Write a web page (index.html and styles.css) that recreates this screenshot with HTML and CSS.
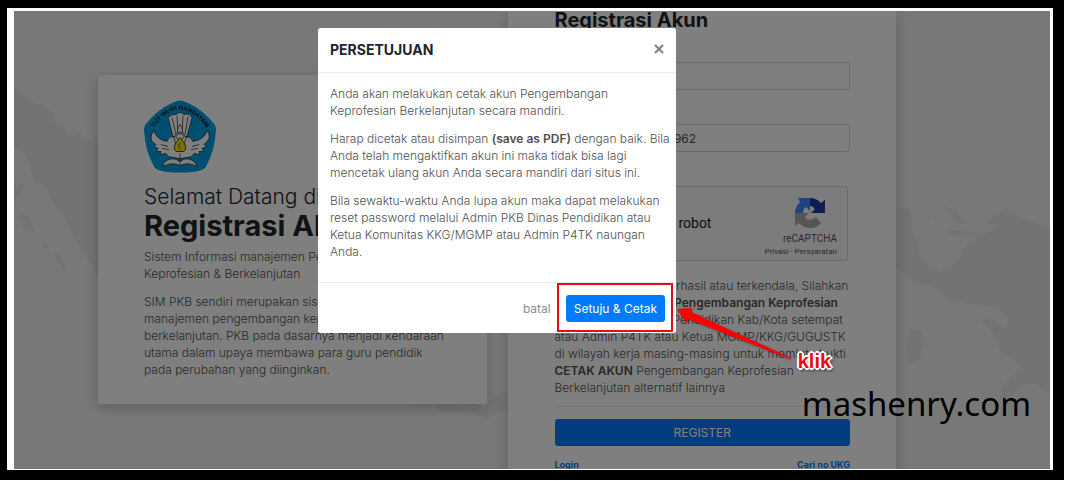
FILE: index.html
```html
<!DOCTYPE html>
<html lang="id">
<head>
<meta charset="utf-8">
<meta name="viewport" content="width=device-width, initial-scale=1">
<title>Registrasi Akun</title>
<link rel="stylesheet" href="styles.css">
</head>
<body>
<div class="stage">
  <div class="frame">
    <svg class="map" viewBox="0 0 1036 457" preserveAspectRatio="xMidYMid slice" aria-hidden="true">
      <path d="M0 76 L12 84 L20 90 L29 94 L39 101 L41 110 L52 116 L57 127 L65 120 L73 129 L82 125 L90 130 L100 138 L100 270 L84 266 L76 250 L68 238 L60 226 L53 209 L46 200 L38 188 L34 176 L21 169 L16 151 L12 143 L0 137 Z"/>
      <path d="M0 170 L12 174 L3 190 L0 192 Z M8 202 L16 205 L22 220 L17 222 L10 215 L5 206 Z M30 228 L36 234 L34 238 L30 234 Z M40 240 L46 243 L52 255 L51 260 L45 252 Z"/>
      <path d="M397 392 L412 394 L420 398 L430 391 L445 396 L460 392 L470 396 L480 384 L494 380 L494 400 L482 402 L475 407 L460 402 L440 400 L420 398 Z"/>
      <path d="M882 196 L894 197 L898 206 L896 214 L901 226 L905 242 L913 254 L925 261 L936 256 L945 247 L949 236 L962 224 L976 220 L983 213 L971 211 L979 204 L991 197 L1002 204 L1018 210 L1036 219 L1036 382 L1018 372 L1008 372 L1000 382 L984 388 L988 374 L998 362 L1010 357 L996 347 L986 340 L978 322 L966 310 L974 305 L990 318 L994 307 L980 295 L958 293 L935 288 L920 276 L900 272 L882 255 Z"/>
      <path d="M926 194 L940 198 L947 208 L955 211 L944 213 L936 204 Z M930 218 L950 219 L966 222 L950 225 L935 222 Z M912 203 L916 205 L914 209 Z M896 316 L906 318 L910 330 L904 348 L896 352 L892 336 Z"/>
    </svg>

    <main class="page">
      <section class="card welcome">
        <svg class="crest" viewBox="0 0 72 72" role="img" aria-label="Tut Wuri Handayani">
          <path d="M36 0 Q39 0 45 3 Q58 9 68 21 Q72 25 72 29 Q71 50 62 66 Q59 72 36 72 Q13 72 10 66 Q1 50 0 29 Q0 25 4 21 Q14 9 27 3 Q33 0 36 0Z" fill="#009ee0"/>
          <path id="arc" d="M10 27 Q36 -9 63 28" fill="none"/>
          <text class="motto"><textPath href="#arc" startOffset="50%" text-anchor="middle">TUT WURI HANDAYANI</textPath></text>
          <g fill="#fff" stroke="#222" stroke-width=".7" stroke-linejoin="round">
            <path d="M24 17 Q28 13 32 14 Q36 10 40 14 Q45 12 48 17 L43 36 H29 Z"/>
            <path d="M28 17 L32 34 M33 15 L34 34 M39 15 L38 34 M44 16 L41 34" fill="none"/>
            <path d="M10 30 Q4 38 10 43 L12 44 L10 46 L14 48 L12 51 L17 51 L16 54 L22 53 L24 56 L35 58 L37 58 L48 56 L50 53 L56 54 L55 51 L60 51 L58 48 L63 46 L60 44 Q69 37 63 30 Q61 39 49 41 Q46 35 42 37 L36 28 L30 37 Q26 34 23 41 Q12 39 10 30Z"/>
            <path d="M17 44 L24 46 M18 48 L25 49 M55 44 L48 46 M54 48 L47 49 M30 37 L32 45 M42 37 L40 45" fill="none"/>
            <path d="M36 24 Q31 31 36 34 Q41 31 36 24Z M32 36 L36 31 L40 36 L38 39 H34Z"/>
            <path d="M36 61 Q28 55 20 62 L19 66 Q28 61 36 65 Q44 61 53 66 L51 62 Q43 55 36 61Z M36 53 V65"/>
          </g>
          <path d="M36 37 Q27 47 32 51 H40 Q45 47 36 37Z" fill="#ffe600" stroke="#222" stroke-width=".8"/>
          <path d="M36 42 Q33 46 37 49" fill="none" stroke="#222" stroke-width=".8"/>
        </svg>
        <h1 class="greeting"><span class="greeting-light">Selamat Datang di</span><span class="greeting-bold">Registrasi Akun</span></h1>
        <p>Sistem Informasi manajemen Pengembangan<br>Keprofesian &amp; Berkelanjutan</p>
        <p>SIM PKB sendiri merupakan sistem informasi<br>manajemen pengembangan keprofesian<br>berkelanjutan. PKB pada dasarnya menjadi kendaraan<br>utama dalam upaya membawa para guru pendidik<br>pada perubahan yang diinginkan.</p>
      </section>

      <form class="card register">
        <h2 class="form-title">Registrasi Akun</h2>
        <div class="field">
          <label for="ukg">No UKG</label>
          <input class="control" id="ukg" type="text">
        </div>
        <div class="field">
          <label for="year">Tahun Lahir</label>
          <div class="date-row">
            <input class="control" type="text" aria-label="Tanggal">
            <input class="control" id="year" type="text" value="1962">
          </div>
        </div>
        <div class="captcha">
          <input type="checkbox" id="robot">
          <label for="robot">Saya bukan robot</label>
          <div class="captcha-brand">
            <svg class="captcha-logo" viewBox="0 0 30 30" aria-hidden="true">
              <path d="M15 0 A15 15 0 0 1 26 5 L30 2 V15 H16 L20 11 Q18 8 15 8Z" fill="#1c3aa9"/>
              <path d="M15 0 H3 L5 4 Q0 9 0 15 H8 Q8 11 11 9 L15 13Z" fill="#4285f4"/>
              <path d="M0 15 V28 L4 25 Q9 30 15 30 Q22 30 26 25 L21 19 Q18 22 15 22 Q12 22 10 19 L14 15Z" fill="#ababab"/>
            </svg>
            <span class="captcha-name">reCAPTCHA</span>
            <span class="captcha-terms">Privasi - Persyaratan</span>
          </div>
        </div>
        <p class="help">Bila registrasi tidak berhasil atau terkendala, Silahkan<br>menghubungi Admin <b>Pengembangan Keprofesian</b><br><b>Berkelanjutan</b> Dinas Pendidikan Kab/Kota setempat<br>atau Admin P4TK atau Ketua MGMP/KKG/GUGUSTK<br>di wilayah kerja masing-masing untuk meminta bukti<br><b>CETAK AKUN</b> Pengembangan Keprofesian<br>Berkelanjutan alternatif lainnya</p>
        <button class="btn btn-block" type="button">REGISTER</button>
        <nav class="links"><a href="#login">Login</a><a href="#ukg">Cari no UKG</a></nav>
      </form>
    </main>

    <div class="overlay">
      <div class="modal" role="dialog" aria-modal="true" aria-labelledby="modal-title">
        <header class="modal-header">
          <h2 id="modal-title">PERSETUJUAN</h2>
          <button class="close" type="button" aria-label="Tutup">
            <svg viewBox="0 0 10 10" aria-hidden="true"><path d="M1 1 L9 9 M9 1 L1 9"/></svg>
          </button>
        </header>
        <div class="modal-body">
          <p>Anda akan melakukan cetak akun Pengembangan<br>Keprofesian Berkelanjutan secara mandiri.</p>
          <p>Harap dicetak atau disimpan <b>(save as PDF)</b> dengan baik. Bila<br>Anda telah mengaktifkan akun ini maka tidak bisa lagi<br>mencetak ulang akun Anda secara mandiri dari situs ini.</p>
          <p>Bila sewaktu-waktu Anda lupa akun maka dapat melakukan<br>reset password melalui Admin PKB Dinas Pendidikan atau<br>Ketua Komunitas KKG/MGMP atau Admin P4TK naungan<br>Anda.</p>
        </div>
        <footer class="modal-footer">
          <button class="btn-text" type="button">batal</button>
          <div class="marked">
            <button class="btn" type="button">Setuju &amp; Cetak</button>
            <svg class="arrow" viewBox="0 0 116 54" aria-hidden="true"><path d="M0 0 L15 -1 L14 3 L114 49 L113 50 L11 10 L9 14Z"/></svg>
            <span class="callout">klik</span>
          </div>
        </footer>
      </div>
    </div>
    <div class="watermark">mashenry.com</div>
  </div>
</div>
</body>
</html>
```
FILE: styles.css
```css
* {
  box-sizing: border-box;
}

body {
  margin: 0;
  background: #fff;
  color: #505050;
  font: 300 12px/17px Inter, "Liberation Sans", sans-serif;
}

h1, h2, p {
  margin: 0;
}

b {
  font-weight: 600;
}

button, input {
  font: inherit;
}

.stage {
  display: flex;
  height: calc(100vh - 1px);
  margin-right: 2px;
  padding: 8px 11px 10px 7px;
  background: #000;
}

.frame {
  position: relative;
  flex: 1;
  overflow: hidden;
  border: solid #fff;
  border-width: 3px 3px 1px 7px;
  background: #f1f1f1;
}

.map {
  position: absolute;
  inset: 0;
  width: 100%;
  height: 100%;
  fill: #e6e7e7;
}

.page {
  position: relative;
  display: grid;
  grid-template-columns: repeat(2, minmax(0, 1fr));
  gap: 21px;
  align-items: start;
  max-width: 966px;
  padding: 0 84px;
}

.card {
  background: #fff;
  box-shadow: 0 4px 14px rgba(0, 0, 0, .22);
}

.welcome {
  margin-top: 64px;
  padding: 25px 46px 26px;
  border-radius: 2px;
  white-space: nowrap;
}

.welcome p {
  margin-bottom: 11px;
}

.welcome p:last-child {
  margin-bottom: 0;
}

.crest {
  display: block;
  width: 72px;
  height: 73px;
  margin-bottom: 10px;
}

.motto {
  font: bold 6px "Liberation Sans", sans-serif;
  fill: #111;
}

.greeting {
  margin-bottom: 6px;
  color: #212529;
}

.greeting span {
  display: block;
}

.greeting-light {
  font-size: 21px;
  font-weight: 300;
  line-height: 27px;
}

.greeting-bold {
  font-size: 29px;
  font-weight: 700;
  line-height: 32px;
}

.register {
  padding: 0 46px 40px 47px;
}

.form-title {
  margin-bottom: 13px;
  color: #212529;
  font-size: 20px;
  font-weight: 700;
  line-height: 18px;
}

.field {
  display: flex;
  flex-direction: column;
  gap: 3px;
  margin-bottom: 14px;
}

.control {
  width: 100%;
  height: 28px;
  padding: 0 8px;
  border: 1px solid #ced4da;
  border-radius: 3px;
  background: #fff;
  color: #495057;
  font-weight: 400;
}

.date-row {
  display: grid;
  grid-template-columns: 1fr 190px;
  gap: 8px;
}

.captcha {
  display: flex;
  align-items: center;
  gap: 12px;
  height: 75px;
  margin: 34px 2px 16px 0;
  padding: 0 10px 0 12px;
  border: 1px solid #d3d3d3;
  border-radius: 3px;
  background: #f9f9f9;
  color: #222;
  font: 14px/17px Roboto, sans-serif;
}

.captcha input {
  width: 24px;
  height: 24px;
  margin: 0;
}

.captcha-brand {
  display: flex;
  flex-direction: column;
  align-items: flex-end;
  margin-left: auto;
  padding-top: 7px;
  color: #555;
}

.captcha-logo {
  width: 30px;
  height: 30px;
  margin: 0 12px 2px 0;
}

.captcha-name {
  font-size: 10px;
  line-height: 18px;
}

.captcha-terms {
  font-size: 8px;
  line-height: 8px;
}

.help {
  margin-bottom: 12px;
  padding-bottom: 10px;
  border-bottom: 1px solid #e5e5e5;
  white-space: nowrap;
}

.btn {
  height: 27px;
  padding: 0 8px;
  border: 0;
  border-radius: 3px;
  background: #007bff;
  color: #fff;
  font-weight: 400;
}

.btn-block {
  display: block;
  width: 100%;
}

.links {
  display: flex;
  justify-content: space-between;
  margin-top: 10px;
  font-size: 9px;
  font-weight: 700;
}

.links a {
  color: #007bff;
}

.overlay {
  position: absolute;
  inset: 0;
  padding: 17px 0 0;
  background: rgba(0, 0, 0, .5);
}

.modal {
  width: 358px;
  margin-left: 304px;
  border-radius: 3px;
  background: #fff;
}

.modal-header {
  display: flex;
  align-items: center;
  justify-content: space-between;
  height: 45px;
  padding: 0 12px 2px;
  border-bottom: 1px solid #e9ecef;
}

.modal-header h2 {
  color: #212529;
  font-size: 14px;
  font-weight: 700;
}

.close {
  display: flex;
  padding: 0;
  border: 0;
  background: none;
}

.close svg {
  width: 10px;
  height: 10px;
  fill: none;
  stroke: #7f7f7f;
  stroke-width: 2;
}

.modal-body {
  display: flex;
  flex-direction: column;
  gap: 11px;
  padding: 12px 12px 22px;
  white-space: nowrap;
}

.modal-footer {
  display: flex;
  align-items: center;
  justify-content: flex-end;
  gap: 15px;
  padding: 12px 11px 11px;
  border-top: 1px solid #e9ecef;
}

.btn-text {
  padding: 0;
  border: 0;
  background: none;
  color: #868e96;
  font-weight: 400;
}

.marked {
  position: relative;
}

.marked::after {
  content: "";
  position: absolute;
  inset: -12px -8px -10px -9px;
  border: 2px solid #e40d16;
}

.arrow {
  position: absolute;
  top: 14px;
  left: 111px;
  width: 116px;
  height: 54px;
  overflow: visible;
  fill: #f00;
  filter: drop-shadow(1px 1px 1px rgba(0, 0, 0, .4));
}

.callout {
  position: absolute;
  top: 54px;
  left: 232px;
  color: #f00814;
  font: bold 20px/24px "Liberation Sans", sans-serif;
  text-shadow: 2px 0 #fff, -2px 0 #fff, 0 2px #fff, 0 -2px #fff, 1px 1px #fff, -1px 1px #fff, 1px -1px #fff, -1px -1px #fff, 2px 3px 3px rgba(0, 0, 0, .6);
}

.watermark {
  position: absolute;
  right: 19px;
  bottom: 41px;
  color: #000;
  font: 33px/48px "Noto Sans", sans-serif;
}
```
